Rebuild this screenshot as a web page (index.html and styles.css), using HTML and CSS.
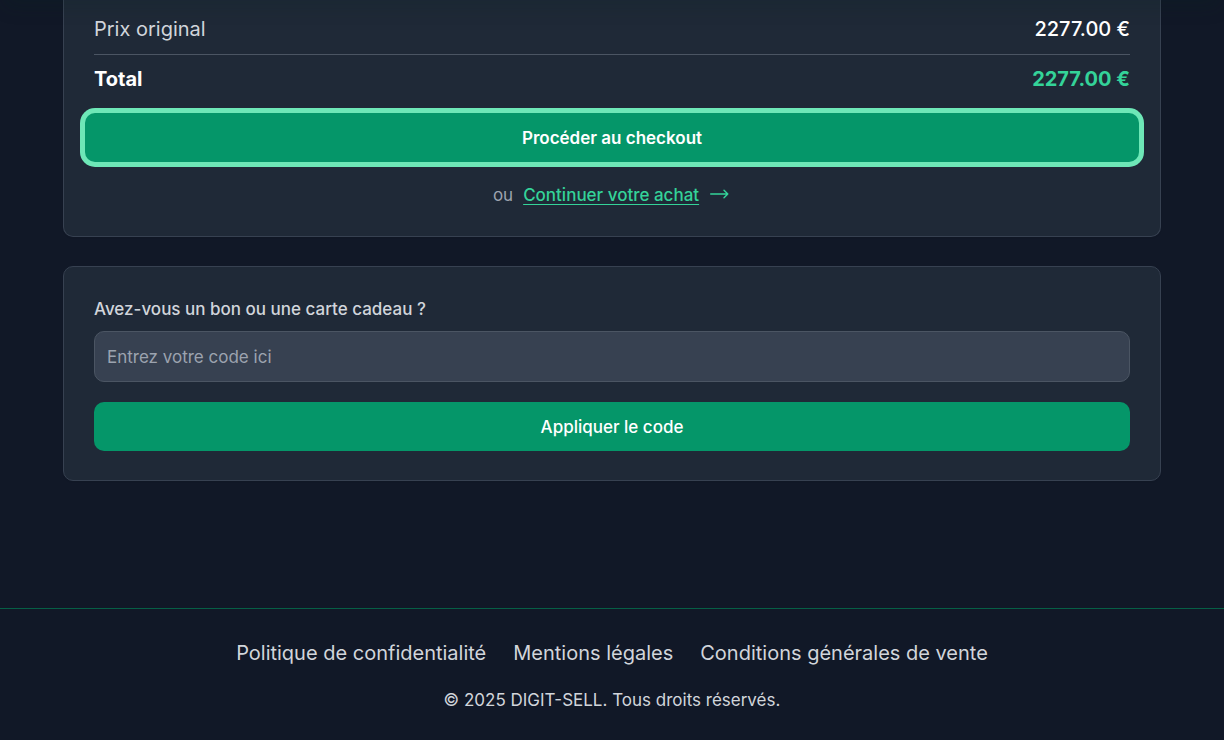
FILE: index.html
```html
<!DOCTYPE html>
<html lang="fr">
<head>
<meta charset="utf-8">
<meta name="viewport" content="width=device-width, initial-scale=1">
<title>Panier – DIGIT-SELL</title>
<link rel="stylesheet" href="styles.css">
</head>
<body>
<header class="topbar"></header>
<main class="cart">
  <section class="card summary">
    <dl class="prices">
      <div class="price-row">
        <dt>Prix original</dt>
        <dd>2277.00 €</dd>
      </div>
      <div class="price-row price-total">
        <dt>Total</dt>
        <dd>2277.00 €</dd>
      </div>
    </dl>
    <button class="button button-checkout" type="button">Procéder au checkout</button>
    <p class="continue">
      <span>ou</span>
      <a class="continue-link" href="#"><span class="continue-text">Continuer votre achat</span>
        <svg class="arrow" viewBox="0 0 24 24" fill="none" stroke="currentColor" stroke-width="1.4" stroke-linecap="round" stroke-linejoin="round" aria-hidden="true"><path d="M3.7 11H20.8M17 7.2 20.8 11 17 14.8"/></svg>
      </a>
    </p>
  </section>
  <form class="card voucher">
    <label class="voucher-label" for="voucher">Avez-vous un bon ou une carte cadeau ?</label>
    <input class="voucher-input" id="voucher" type="text" placeholder="Entrez votre code ici">
    <button class="button" type="button">Appliquer le code</button>
  </form>
</main>
<footer class="footer">
  <nav class="footer-links">
    <a href="#">Politique de confidentialité</a>
    <a href="#">Mentions légales</a>
    <a href="#">Conditions générales de vente</a>
  </nav>
  <p class="copyright">© 2025 DIGIT-SELL. Tous droits réservés.</p>
</footer>
</body>
</html>
```
FILE: styles.css
```css
* {
  box-sizing: border-box;
}

body {
  margin: 0;
  background: #111827;
  color: #d1d5db;
  font-family: Inter, "Liberation Sans", sans-serif;
  font-size: 20px;
  line-height: 30px;
}

dl, dd, p {
  margin: 0;
}

.topbar {
  position: relative;
  height: 60px;
  margin-top: -60px;
  box-shadow: 0 12px 18px -4px rgba(6, 40, 28, 0.16);
}

.cart {
  display: flex;
  flex-direction: column;
  gap: 29px;
  max-width: 1250px;
  margin: 0 auto;
  padding: 0 63px;
}

.card {
  display: flex;
  flex-direction: column;
  padding: 29px 30px;
  border: 1px solid #374151;
  border-radius: 10px;
  background: #1f2937;
  box-shadow: 0 1px 2px rgba(0, 0, 0, 0.05);
}

.summary {
  padding-top: 14px;
  border-top: 0;
  border-radius: 0 0 10px 10px;
}

.price-row {
  display: flex;
  justify-content: space-between;
}

.price-row dd {
  color: #fff;
  font-weight: 500;
}

.price-total {
  margin-top: 10px;
  padding-top: 9px;
  border-top: 1px solid #4b5563;
  color: #fff;
  font-weight: 700;
}

.price-total dd {
  color: #34d399;
  font-weight: 700;
}

.button {
  padding: 13px 24px 11px;
  border: 0;
  border-radius: 10px;
  background: #059669;
  color: #fff;
  font: 500 17px/25px Inter, "Liberation Sans", sans-serif;
  cursor: pointer;
}

.button-checkout {
  margin: 19px -9px 0;
  box-shadow: 0 0 0 5px #6ee7b7;
  font-weight: 600;
}

.continue {
  display: flex;
  justify-content: center;
  gap: 10px;
  margin-top: 21px;
  margin-bottom: -1px;
  color: #9ca3af;
  font-size: 17px;
  line-height: 25px;
}

.continue-link {
  display: inline-flex;
  align-items: flex-start;
  gap: 8px;
  color: #34d399;
  font-weight: 500;
  text-decoration: none;
}

.continue-text {
  text-decoration: underline;
  text-underline-offset: 3px;
  text-decoration-thickness: 1px;
}

.arrow {
  width: 24px;
  height: 24px;
}

.voucher-label {
  font-size: 17px;
  line-height: 27px;
  font-weight: 500;
}

.voucher-input {
  width: 100%;
  margin: 8px 0 20px;
  padding: 13px 12px 11px;
  border: 1px solid #4b5563;
  border-radius: 10px;
  background: #374151;
  color: #fff;
  font: 400 17px/25px Inter, "Liberation Sans", sans-serif;
}

.voucher-input::placeholder {
  color: #9ca3af;
}

.footer {
  margin-top: 127px;
  padding: 29px 30px 27px;
  border-top: 1px solid #065f46;
  text-align: center;
}

.footer-links {
  display: flex;
  flex-wrap: wrap;
  justify-content: center;
  gap: 10px 27px;
}

.footer-links a {
  color: inherit;
  text-decoration: none;
}

.copyright {
  margin-top: 20px;
  font-size: 17px;
  line-height: 25px;
}
```
